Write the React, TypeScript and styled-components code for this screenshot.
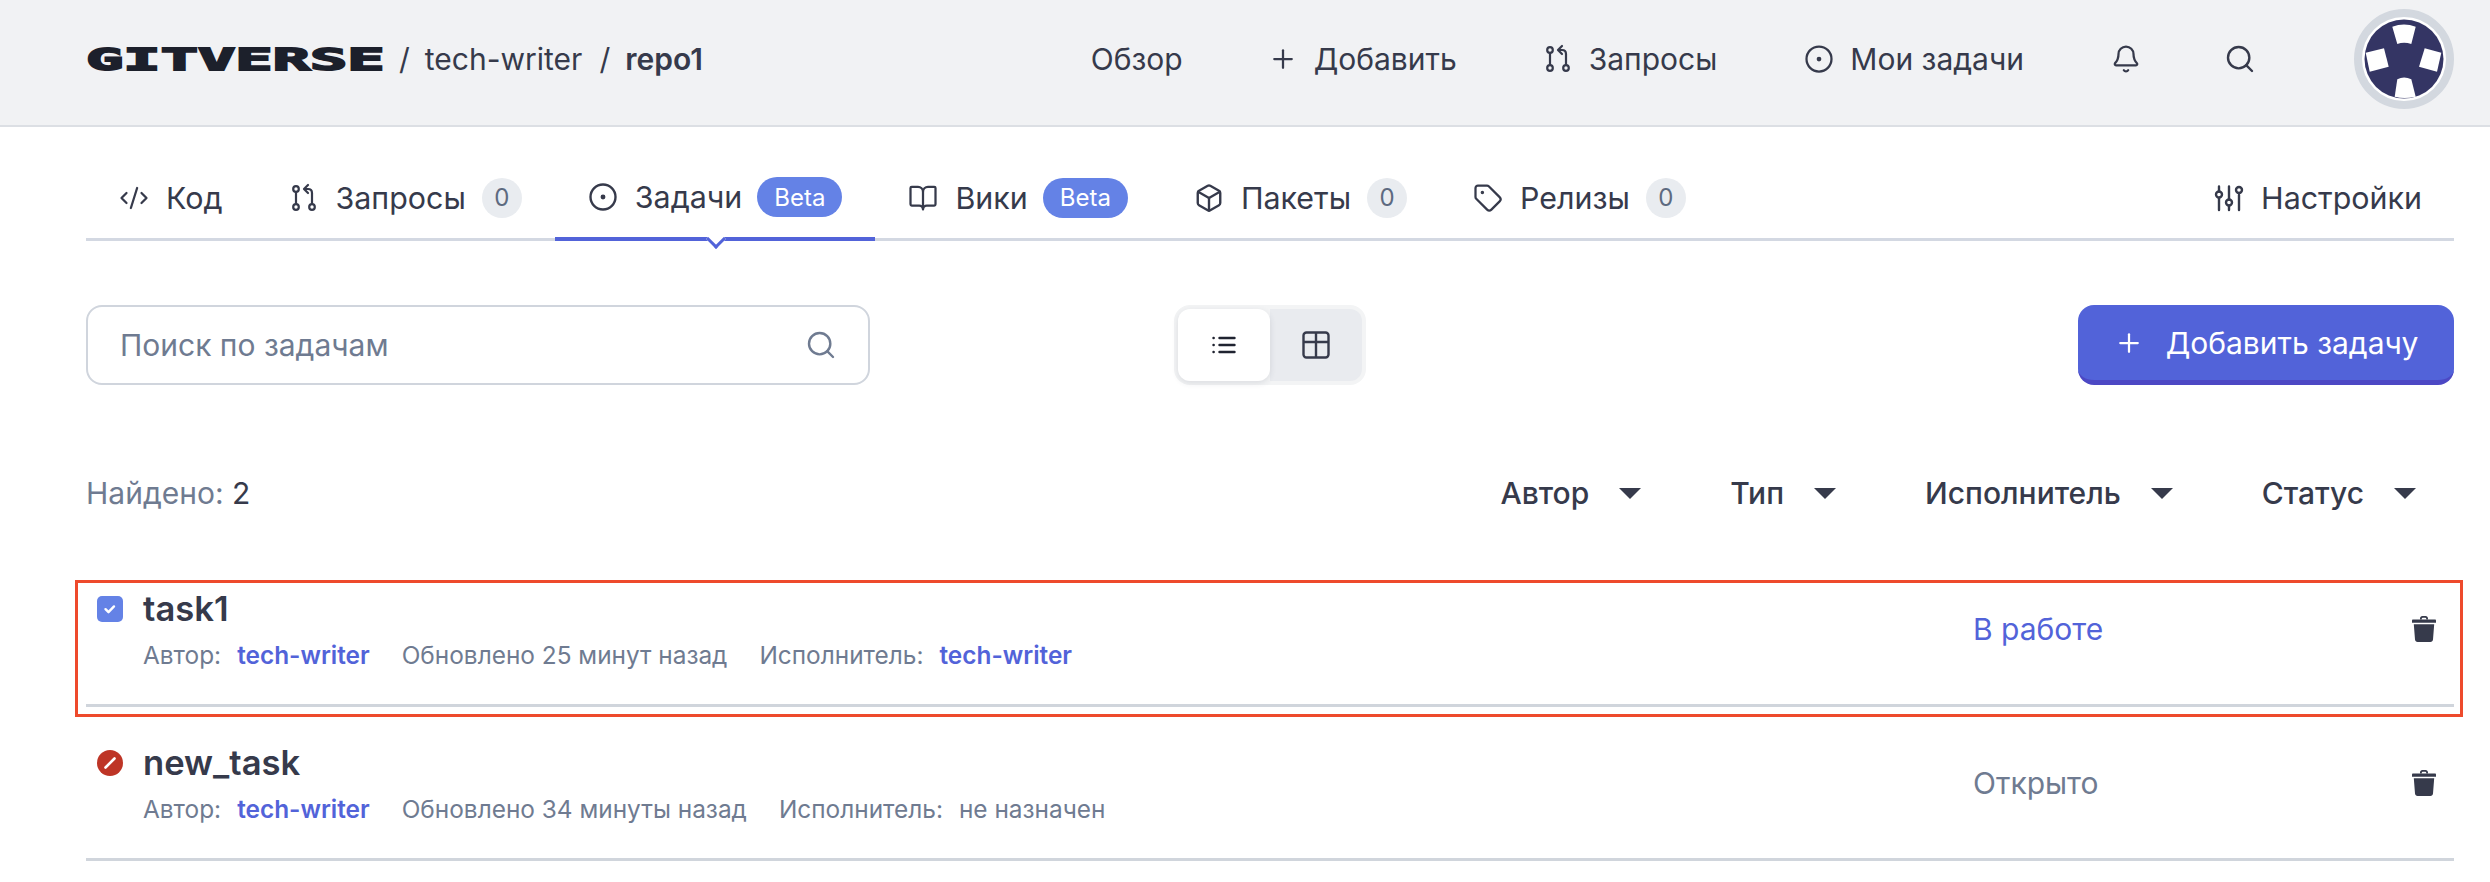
import React from 'react';
import styled, { createGlobalStyle } from 'styled-components';
import { Bell, BookOpen, Box, CircleDot, CodeXml, Plus, Search, Tag } from 'lucide-react';

const GlobalStyle = createGlobalStyle`
  html, body {
    margin: 0;
    background: #fff;
  }
  body {
    font-family: Inter, "Liberation Sans", sans-serif;
    color: #363a4b;
  }
  * {
    box-sizing: border-box;
  }
`;

const Page = styled.div`
  width: 2490px;
  height: 882px;
  overflow: hidden;
`;

const Header = styled.header`
  height: 127px;
  background: #f1f2f4;
  border-bottom: 2px solid #dcdfe4;
  display: flex;
  align-items: center;
  padding: 0 36px 7px 86px;
`;

const LogoBox = styled.div`
  width: 296px;
  height: 30px;
  display: flex;
  align-items: center;
`;

const Logo = styled.span`
  display: inline-block;
  font-family: "DejaVu Sans Mono", monospace;
  font-weight: 700;
  font-size: 31px;
  line-height: 30px;
  color: #1c202b;
  transform: scaleX(2);
  transform-origin: left center;
  -webkit-text-stroke: 1.8px #1c202b;
  white-space: nowrap;
`;

const Crumbs = styled.div`
  display: flex;
  align-items: center;
  font-size: 30px;
  margin-left: 17px;
  color: #363a4b;
`;

const Slash = styled.span`
  margin-right: 15px;
`;

const CrumbLink = styled.span<{ $bold?: boolean }>`
  font-weight: ${p => (p.$bold ? 600 : 400)};
  margin-right: 17px;
`;

const Nav = styled.nav`
  margin-left: auto;
  display: flex;
  align-items: center;
  font-size: 30px;
`;

const NavItem = styled.span<{ $gap: number }>`
  display: flex;
  align-items: center;
  gap: 16px;
  margin-right: ${p => p.$gap}px;
  white-space: nowrap;
`;

const NavIconButton = styled.span<{ $gap: number }>`
  display: flex;
  margin-right: ${p => p.$gap}px;
`;

const Avatar = styled.div`
  width: 100px;
  height: 100px;
`;

const Content = styled.main`
  padding: 0 36px 0 86px;
`;

const Tabs = styled.div`
  height: 114px;
  display: flex;
  align-items: stretch;
  border-bottom: 3px solid #d3d8e2;
`;

const Tab = styled.div<{ $active?: boolean }>`
  position: relative;
  display: flex;
  align-items: center;
  padding: 30px 33px 0;
  gap: 17px;
  font-size: 30.4px;
  color: #363a4b;
  white-space: nowrap;
  margin-bottom: ${p => (p.$active ? '-3px' : '0')};
  border-bottom: ${p => (p.$active ? '4px solid #5263d9' : 'none')};

  ${p =>
    p.$active &&
    `
    &::after {
      content: '';
      position: absolute;
      left: 50%;
      bottom: -9px;
      width: 11px;
      height: 11px;
      margin-left: -6px;
      background: #fff;
      border-right: 3px solid #5263d9;
      border-bottom: 3px solid #5263d9;
      transform: rotate(45deg);
    }
  `}
`;

const SettingsTab = styled(Tab)`
  margin-left: auto;
  padding-right: 32px;
`;

const CountBadge = styled.span`
  width: 40px;
  height: 40px;
  border-radius: 50%;
  background: #e9ecf0;
  color: #5d6a80;
  font-size: 24px;
  display: flex;
  align-items: center;
  justify-content: center;
  margin-left: -1px;
`;

const BetaBadge = styled.span`
  height: 40px;
  padding: 0 17px;
  border-radius: 20px;
  background: #6482e6;
  color: #fff;
  font-size: 24px;
  display: flex;
  align-items: center;
  margin-left: -2px;
`;

const Toolbar = styled.div`
  display: grid;
  grid-template-columns: 784px 1fr 376px;
  align-items: center;
  margin-top: 64px;
`;

const SearchBox = styled.div`
  height: 80px;
  border: 2px solid #d0d5dd;
  border-radius: 16px;
  display: flex;
  align-items: center;
  justify-content: space-between;
  padding: 0 31px 0 32px;
  font-size: 30px;
  color: #6f7b91;
`;

const ViewToggle = styled.div`
  justify-self: start;
  margin-left: 304px;
  width: 192px;
  height: 80px;
  padding: 4px;
  border-radius: 16px;
  background: #f3f4f5;
  display: flex;
`;

const ViewOption = styled.div<{ $active?: boolean }>`
  flex: 1;
  display: flex;
  align-items: center;
  justify-content: center;
  background: ${p => (p.$active ? '#fff' : '#e9ebef')};
  border-radius: ${p => (p.$active ? '12px' : '0 12px 12px 0')};
  box-shadow: ${p => (p.$active ? '0 2px 6px rgba(40, 50, 70, 0.12)' : 'none')};
  z-index: ${p => (p.$active ? 1 : 0)};
`;

const AddButton = styled.button`
  height: 80px;
  border: none;
  border-bottom: 5px solid #4c48c4;
  border-radius: 16px;
  background: #5263d9;
  color: #fff;
  font-family: inherit;
  font-size: 30px;
  display: flex;
  align-items: center;
  justify-content: center;
  gap: 22px;
  padding: 0;
`;

const FilterBar = styled.div`
  display: flex;
  align-items: center;
  justify-content: space-between;
  margin-top: 84px;
  height: 48px;
`;

const Found = styled.div`
  font-size: 30px;
  color: #6f7b91;

  b {
    font-weight: 400;
    color: #363a4b;
  }
`;

const Filters = styled.div`
  display: flex;
  align-items: center;
  font-size: 30px;
  font-weight: 500;
`;

const Filter = styled.div`
  display: flex;
  align-items: center;
  gap: 30px;
  margin-right: 38px;
  margin-left: 51px;
`;

const Caret = styled.span`
  width: 0;
  height: 0;
  border-left: 11px solid transparent;
  border-right: 11px solid transparent;
  border-top: 11px solid #363a4b;
`;

const TaskList = styled.div`
  margin-top: 36px;
`;

const TaskRow = styled.div<{ $marked?: boolean }>`
  position: relative;
  height: 154px;
  display: grid;
  grid-template-columns: 57px 1830px 439px 1fr;
  align-items: center;
  border-bottom: 3px solid #d0d5dc;

  ${p =>
    p.$marked &&
    `
    &::after {
      content: '';
      position: absolute;
      top: 27px;
      left: -11px;
      right: -9px;
      bottom: -13px;
      border: 3px solid #ee4a2c;
      pointer-events: none;
    }
  `}
`;

const TypeIcon = styled.div`
  align-self: start;
  margin: 43px 0 0 11px;
  display: flex;
`;

const TaskMain = styled.div`
  align-self: start;
  margin-top: 33px;
`;

const TaskTitle = styled.div`
  font-size: 34.6px;
  line-height: 44px;
  font-weight: 600;
  color: #363a4b;
`;

const TaskMeta = styled.div`
  margin-top: 9px;
  height: 32px;
  display: flex;
  align-items: center;
  font-size: 24.4px;
  color: #6f7b91;
`;

const MetaLabel = styled.span<{ $gap: number }>`
  margin-right: ${p => p.$gap}px;
`;

const MetaLink = styled.span`
  font-weight: 600;
  color: #5263d9;
  margin-right: 32px;
`;

const TaskStatus = styled.div<{ $color: string }>`
  font-size: 30px;
  color: ${p => p.$color};
`;

const Trash = styled.div`
  display: flex;
`;

const TrashIcon = () => (
  <svg width="24" height="26" viewBox="0 0 24 26" fill="#363a4b">
    <path d="M8 3.5V2.4C8 1.1 9 0 10.4 0h3.2C15 0 16 1.1 16 2.4v1.1h-1.8V2.6c0-.5-.4-.9-.9-.9h-2.6c-.5 0-.9.4-.9.9v.9z" />
    <path d="M1 3.5h22c.6 0 1 .5 1 1v2.2H0V4.5c0-.5.4-1 1-1z" />
    <path d="M1.8 8.2h20.4L21 23.6c-.1 1.4-1.2 2.4-2.6 2.4H5.6C4.2 26 3.1 25 3 23.6z" />
  </svg>
);

const CheckTypeIcon = () => (
  <svg width="26" height="26" viewBox="0 0 26 26">
    <rect width="26" height="26" rx="5" fill="#6482e6" />
    <path d="M8.5 13.2l3 3 5.5-5.8" fill="none" stroke="#fff" strokeWidth="2.4" strokeLinecap="round" strokeLinejoin="round" />
  </svg>
);

const BugTypeIcon = () => (
  <svg width="26" height="26" viewBox="0 0 26 26">
    <circle cx="13" cy="13" r="13" fill="#be3526" />
    <path d="M8.5 17.5l9-9" fill="none" stroke="#fff" strokeWidth="2.6" strokeLinecap="round" />
  </svg>
);

const ListIcon = () => (
  <svg width="26" height="26" viewBox="0 0 26 26" fill="none" stroke="#1f2330" strokeWidth="2.4" strokeLinecap="round">
    <path d="M8.5 6h15M8.5 13h15M8.5 20h15" />
    <path d="M2.5 6h.2M2.5 13h.2M2.5 20h.2" />
  </svg>
);

const TableIcon = () => (
  <svg width="28" height="28" viewBox="0 0 28 28" fill="none" stroke="#363a4b" strokeWidth="2.4" strokeLinejoin="round">
    <rect x="1.5" y="1.5" width="25" height="25" rx="3" />
    <path d="M1.5 11h25M14 1.5v25" />
  </svg>
);

const BranchIcon = () => (
  <svg width="30" height="30" viewBox="0 0 30 30" fill="none" stroke="currentColor" strokeWidth="2.2" strokeLinecap="round" strokeLinejoin="round">
    <circle cx="7" cy="6" r="2.8" />
    <circle cx="7" cy="24" r="2.8" />
    <circle cx="23" cy="24" r="2.8" />
    <path d="M7 9v12" />
    <path d="M23 21V10c0-2.5-1.5-4-4-4h-3" />
    <path d="M19 2l-4 4 4 4" />
  </svg>
);

const SlidersIcon = () => (
  <svg width="30" height="30" viewBox="0 0 30 30" fill="none" stroke="currentColor" strokeWidth="2.4" strokeLinecap="round">
    <path d="M5 3.5v5M5 15v12" />
    <circle cx="5" cy="11.5" r="3" />
    <path d="M15 3.5v13M15 23v4" />
    <circle cx="15" cy="19.5" r="3" />
    <path d="M25 12v15" />
    <circle cx="25" cy="7" r="3" />
  </svg>
);

const AvatarIcon = () => (
  <svg width="100" height="100" viewBox="0 0 100 100">
    <circle cx="50" cy="50" r="46" fill="#fff" stroke="#d3d8df" strokeWidth="8" />
    <circle cx="50" cy="50" r="39.5" fill="#343564" />
    <path d="M38.3 17.7Q50 13.5 61.7 17.7L57.3 35Q50 32.5 43.3 35Z" fill="#fff" />
    <path d="M11.7 43.7L30 39.3L34.7 57.7L15.7 62.7Z" fill="#fff" />
    <path d="M70.7 39.3L87.3 43.7L83 62.7L65 57.7Z" fill="#fff" />
    <path d="M43.3 70.3Q50 66.5 57.3 70.3L61.7 87.7Q50 90.5 40.7 87.7Z" fill="#fff" />
  </svg>
);

const tasks = [
  {
    id: 'task1',
    title: 'task1',
    updated: 'Обновлено 25 минут назад',
    assignee: 'tech-writer',
    status: 'В работе',
    statusColor: '#5263d9',
    marked: true,
    icon: <CheckTypeIcon />,
  },
  {
    id: 'new_task',
    title: 'new_task',
    updated: 'Обновлено 34 минуты назад',
    assignee: '',
    status: 'Открыто',
    statusColor: '#6f7b91',
    marked: false,
    icon: <BugTypeIcon />,
  },
];

const App: React.FC = () => {
  return (
    <Page>
      <GlobalStyle />
      <Header>
        <LogoBox>
          <Logo>GITVERSE</Logo>
        </LogoBox>
        <Crumbs>
          <Slash>/</Slash>
          <CrumbLink>tech-writer</CrumbLink>
          <Slash>/</Slash>
          <CrumbLink $bold>repo1</CrumbLink>
        </Crumbs>
        <Nav>
          <NavItem $gap={85}>Обзор</NavItem>
          <NavItem $gap={86}>
            <Plus size={30} strokeWidth={1.8} />
            Добавить
          </NavItem>
          <NavItem $gap={87}>
            <BranchIcon />
            Запросы
          </NavItem>
          <NavItem $gap={87}>
            <CircleDot size={30} strokeWidth={1.8} />
            Мои задачи
          </NavItem>
          <NavIconButton $gap={83}>
            <Bell size={30} strokeWidth={1.8} />
          </NavIconButton>
          <NavIconButton $gap={98}>
            <Search size={32} strokeWidth={1.8} />
          </NavIconButton>
          <Avatar>
            <AvatarIcon />
          </Avatar>
        </Nav>
      </Header>
      <Content>
        <Tabs>
          <Tab>
            <CodeXml size={30} strokeWidth={1.8} />
            Код
          </Tab>
          <Tab>
            <BranchIcon />
            Запросы
            <CountBadge>0</CountBadge>
          </Tab>
          <Tab $active>
            <CircleDot size={30} strokeWidth={1.9} />
            Задачи
            <BetaBadge>Beta</BetaBadge>
          </Tab>
          <Tab>
            <BookOpen size={30} strokeWidth={1.8} />
            Вики
            <BetaBadge>Beta</BetaBadge>
          </Tab>
          <Tab>
            <Box size={30} strokeWidth={1.9} />
            Пакеты
            <CountBadge>0</CountBadge>
          </Tab>
          <Tab>
            <Tag size={30} strokeWidth={1.8} />
            Релизы
            <CountBadge>0</CountBadge>
          </Tab>
          <SettingsTab>
            <SlidersIcon />
            Настройки
          </SettingsTab>
        </Tabs>
        <Toolbar>
          <SearchBox>
            Поиск по задачам
            <Search size={32} strokeWidth={1.8} color="#6f7b91" />
          </SearchBox>
          <ViewToggle>
            <ViewOption $active>
              <ListIcon />
            </ViewOption>
            <ViewOption>
              <TableIcon />
            </ViewOption>
          </ViewToggle>
          <AddButton>
            <Plus size={30} strokeWidth={1.8} />
            Добавить задачу
          </AddButton>
        </Toolbar>
        <FilterBar>
          <Found>
            Найдено: <b>2</b>
          </Found>
          <Filters>
            {['Автор', 'Тип', 'Исполнитель', 'Статус'].map(name => (
              <Filter key={name}>
                {name}
                <Caret />
              </Filter>
            ))}
          </Filters>
        </FilterBar>
        <TaskList>
          {tasks.map(task => (
            <TaskRow key={task.id} $marked={task.marked}>
              <TypeIcon>{task.icon}</TypeIcon>
              <TaskMain>
                <TaskTitle>{task.title}</TaskTitle>
                <TaskMeta>
                  <MetaLabel $gap={16}>Автор:</MetaLabel>
                  <MetaLink>tech-writer</MetaLink>
                  <MetaLabel $gap={32}>{task.updated}</MetaLabel>
                  <MetaLabel $gap={16}>Исполнитель:</MetaLabel>
                  {task.assignee ? <MetaLink>{task.assignee}</MetaLink> : <span>не назначен</span>}
                </TaskMeta>
              </TaskMain>
              <TaskStatus $color={task.statusColor}>{task.status}</TaskStatus>
              <Trash>
                <TrashIcon />
              </Trash>
            </TaskRow>
          ))}
        </TaskList>
      </Content>
    </Page>
  );
};

export default App;
